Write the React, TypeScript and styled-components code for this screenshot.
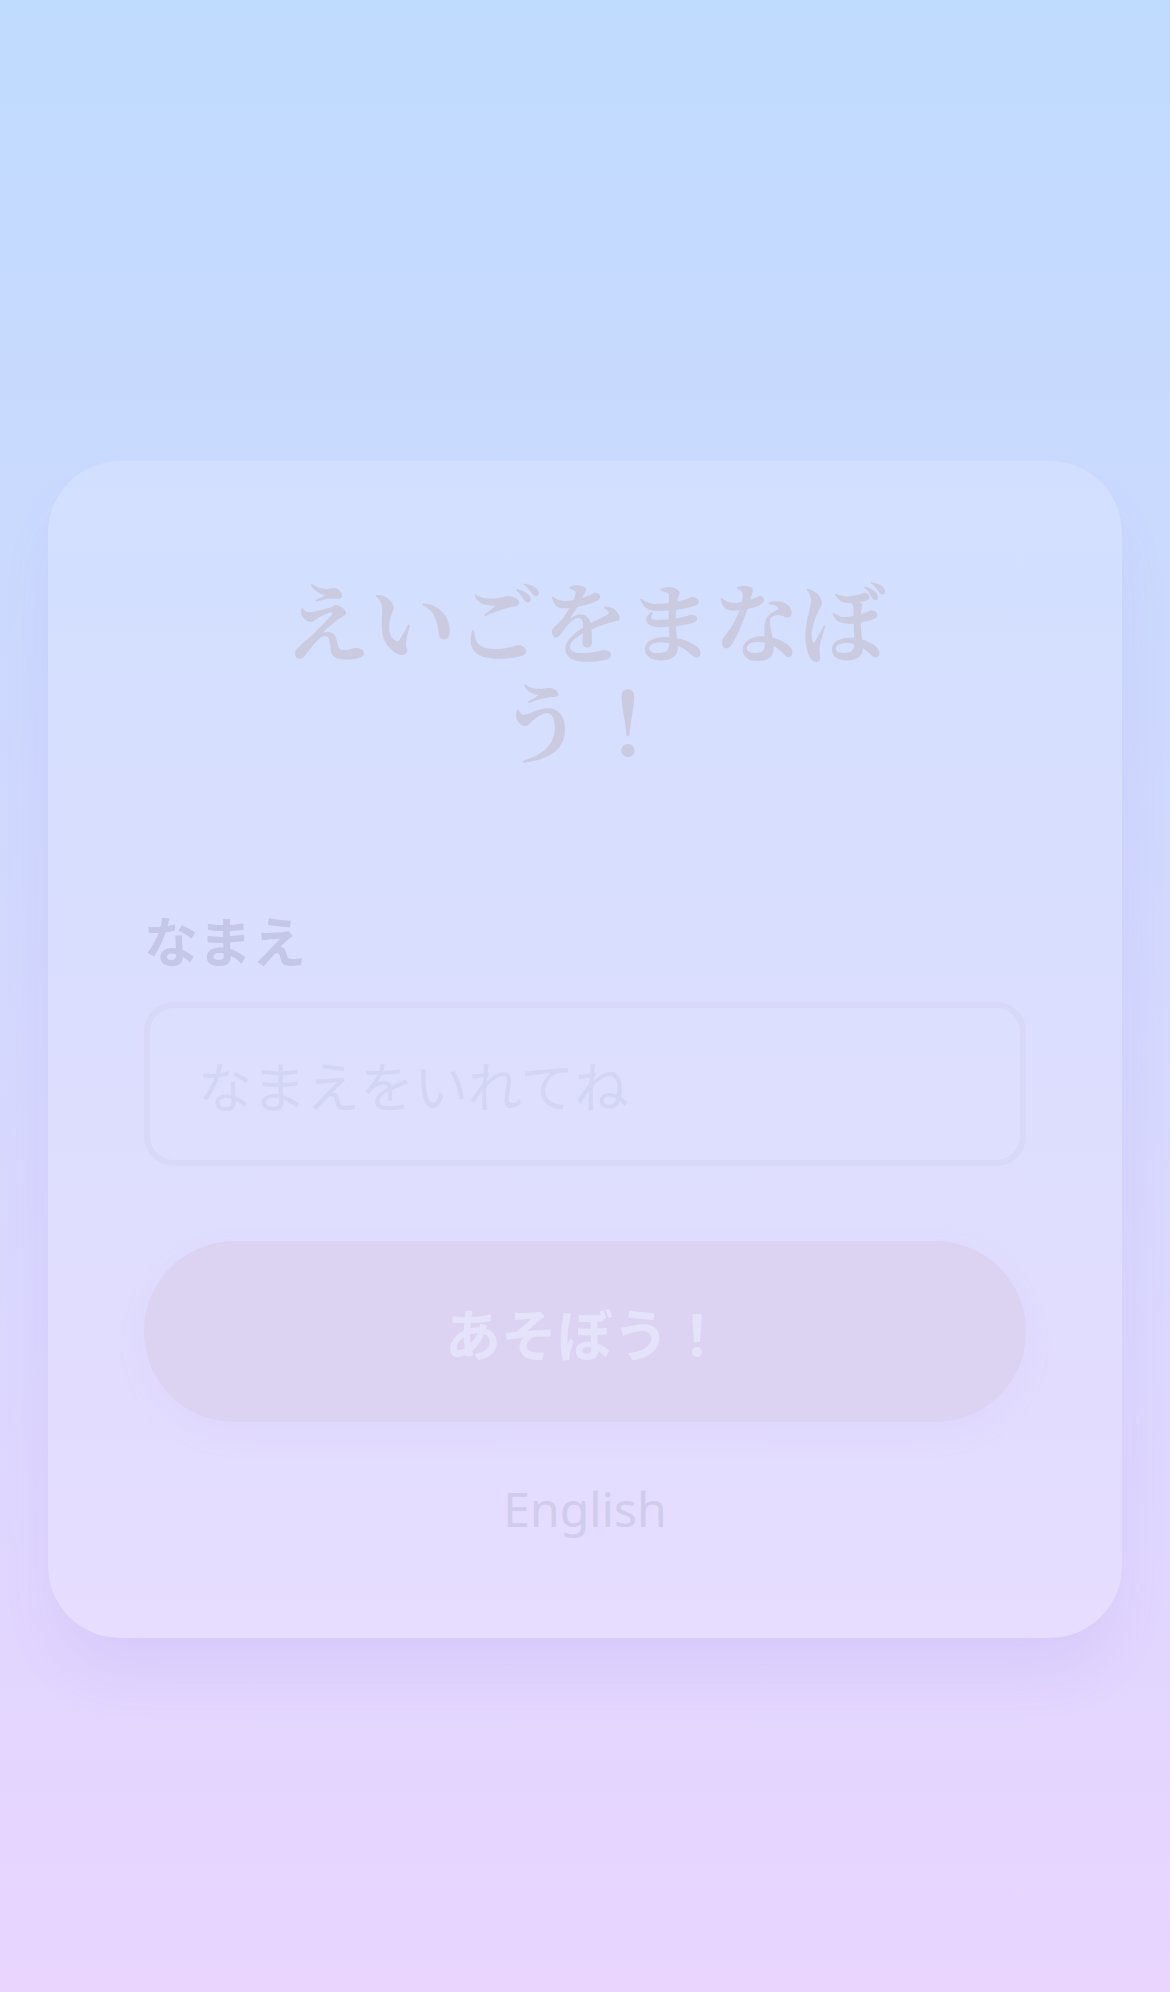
import React from "react";
import styled, { createGlobalStyle } from "styled-components";

const GlobalStyle = createGlobalStyle`
  html, body {
    margin: 0;
    padding: 0;
  }
  body {
    min-height: 1992px;
    background: linear-gradient(180deg, #bfdbfe 0%, #e9d5ff 100%);
    font-family: "Noto Sans", "Noto Sans CJK JP", sans-serif;
  }
  * { box-sizing: border-box; }
`;

const Page = styled.main`
  min-height: 1992px;
  padding: 461px 48px 0;
  display: flex;
  flex-direction: column;
  align-items: stretch;
`;

const Card = styled.section`
  background: rgba(255, 255, 255, 0.17);
  border-radius: 72px;
  padding: 96px 96px 93px;
  box-shadow: 0 40px 60px -12px rgba(140, 110, 210, 0.12);
  display: flex;
  flex-direction: column;
`;

const Title = styled.h1`
  margin: 12px auto 130px;
  max-width: 730px;
  text-align: center;
  font-family: "Noto Serif CJK JP", "Noto Sans CJK JP", serif;
  font-weight: 700;
  font-size: 86px;
  line-height: 100px;
  color: #cacbe1;
`;

const Label = styled.label`
  display: block;
  font-family: "Noto Sans CJK JP", sans-serif;
  font-weight: 700;
  font-size: 54px;
  line-height: 81px;
  color: #c4c7e8;
  margin-bottom: 22px;
`;

const Input = styled.input`
  width: 100%;
  height: 164px;
  border: 6px solid #d8d9f8;
  border-radius: 30px;
  background: rgba(255, 255, 255, 0.03);
  padding: 0 48px;
  font-family: "Noto Sans CJK JP", sans-serif;
  font-size: 54px;
  color: #b8bce0;
  outline: none;
  &::placeholder {
    color: #d3d5f5;
  }
`;

const PlayButton = styled.button`
  margin-top: 75px;
  width: 100%;
  height: 181px;
  border: none;
  border-radius: 999px;
  background: #dcd3f2;
  box-shadow: 0 12px 30px rgba(190, 150, 230, 0.08);
  font-family: "Noto Sans CJK JP", sans-serif;
  font-weight: 700;
  font-size: 56px;
  color: #e5e3fb;
  cursor: pointer;
`;

const LangLink = styled.button`
  margin: 51px auto 0;
  border: none;
  background: none;
  padding: 0;
  font-family: "Noto Sans", "Open Sans", sans-serif;
  font-size: 48px;
  line-height: 72px;
  color: #d0cceb;
  cursor: pointer;
`;

export default function App() {
  return (
    <>
      <GlobalStyle />
      <Page>
        <Card>
          <Title>えいごをまなぼう！</Title>
          <Label htmlFor="name">なまえ</Label>
          <Input id="name" placeholder="なまえをいれてね" />
          <PlayButton>あそぼう！</PlayButton>
          <LangLink>English</LangLink>
        </Card>
      </Page>
    </>
  );
}
